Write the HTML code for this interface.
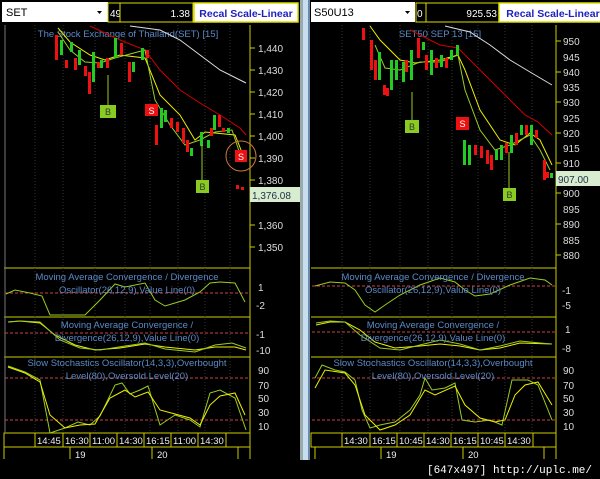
<!DOCTYPE html>
<html><head><meta charset="utf-8"><style>
html,body{margin:0;padding:0;background:#000;width:600px;height:479px;overflow:hidden;font-family:"Liberation Sans",sans-serif}
svg{display:block}
</style></head><body>
<svg width="600" height="479" viewBox="0 0 600 479" xmlns="http://www.w3.org/2000/svg" font-family="Liberation Sans, sans-serif">
<rect width="600" height="479" fill="#000"/>
<!-- divider -->
<rect x="300" y="0" width="3" height="460" fill="#9aa"/>
<rect x="303" y="0" width="5" height="460" fill="#c9ddf0"/>
<rect x="308" y="0" width="2" height="460" fill="#6a8aa8"/>

<!-- LEFT HEADER -->
<rect x="2" y="2" width="106" height="20" fill="#fff"/>
<text x="6" y="16" font-size="11" fill="#000">SET</text>
<path d="M97 11h5l-2.5 3z" fill="#000"/>
<rect x="108" y="3" width="12" height="19" fill="#000" stroke="#dd0" stroke-width="1"/>
<text x="110" y="17" font-size="10" fill="#fff">49</text>
<rect x="120" y="3" width="73" height="19" fill="#000" stroke="#dd0" stroke-width="1"/>
<text x="190" y="17" font-size="10" fill="#fff" text-anchor="end">1.38</text>
<rect x="194" y="3" width="104" height="19" fill="#fff" stroke="#dd0" stroke-width="1.5"/>
<text x="246" y="17" font-size="10.5" fill="#2020c0" font-weight="bold" text-anchor="middle">Recal Scale-Linear</text>

<!-- RIGHT HEADER -->
<rect x="311" y="2" width="104" height="20" fill="#fff"/>
<text x="314" y="16" font-size="11" fill="#000">S50U13</text>
<path d="M405 11h5l-2.5 3z" fill="#000"/>
<rect x="416" y="3" width="10" height="19" fill="#000" stroke="#dd0"/>
<text x="417" y="17" font-size="10" fill="#fff">0</text>
<rect x="426" y="3" width="73" height="19" fill="#000" stroke="#dd0"/>
<text x="497" y="17" font-size="10" fill="#fff" text-anchor="end">925.53</text>
<rect x="499" y="3" width="104" height="19" fill="#fff" stroke="#dd0" stroke-width="1.5"/>
<text x="553" y="17" font-size="10.5" fill="#2020c0" font-weight="bold" text-anchor="middle">Recal Scale-Linear</text>

<!-- LEFT PANEL FRAME -->
<g stroke="#cc0" fill="none" stroke-width="1">
<line x1="250" y1="25" x2="250" y2="459"/>
<line x1="4" y1="268" x2="250" y2="268"/>
<line x1="4" y1="317" x2="250" y2="317"/>
<line x1="4" y1="357" x2="250" y2="357"/>
<rect x="4" y="433" width="246" height="14"/>
<line x1="4" y1="447" x2="4" y2="459"/>
<line x1="70" y1="447" x2="70" y2="459"/>
<line x1="152" y1="447" x2="152" y2="459"/>
<line x1="238" y1="447" x2="238" y2="459"/>
</g>
<line x1="5" y1="25" x2="5" y2="433" stroke="#777" stroke-width="1"/>
<!-- grid dotted verticals left -->
<g stroke="#333" stroke-dasharray="1,2">
<line x1="35" y1="25" x2="35" y2="433"/><line x1="63" y1="25" x2="63" y2="433"/><line x1="95" y1="25" x2="95" y2="433"/><line x1="125" y1="25" x2="125" y2="433"/><line x1="150" y1="25" x2="150" y2="433"/><line x1="178" y1="25" x2="178" y2="433"/><line x1="205" y1="25" x2="205" y2="433"/><line x1="230" y1="25" x2="230" y2="433"/>
</g>
<!-- left axis labels -->
<g font-size="10" fill="#ddd">
<text x="258" y="52">1,440</text><text x="258" y="74">1,430</text><text x="258" y="96">1,420</text><text x="258" y="118">1,410</text><text x="258" y="140">1,400</text><text x="258" y="162">1,390</text><text x="258" y="184">1,380</text><text x="258" y="229">1,360</text><text x="258" y="251">1,350</text>
</g>
<g stroke="#cc0"><line x1="250" y1="48" x2="255" y2="48"/><line x1="250" y1="70" x2="255" y2="70"/><line x1="250" y1="92" x2="255" y2="92"/><line x1="250" y1="114" x2="255" y2="114"/><line x1="250" y1="136" x2="255" y2="136"/><line x1="250" y1="158" x2="255" y2="158"/><line x1="250" y1="180" x2="255" y2="180"/><line x1="250" y1="225" x2="255" y2="225"/><line x1="250" y1="247" x2="255" y2="247"/></g>
<rect x="250" y="187" width="50" height="15" fill="#d8ecd0"/>
<text x="252" y="199" font-size="10" fill="#234">1,376.08</text>
<text x="128" y="37" font-size="9.5" fill="#5a8ac8" text-anchor="middle">The Stock Exchange of Thailand(SET) [15]</text>

<!-- left MAs -->
<polyline fill="none" stroke="#ddd" stroke-width="1" points="130,26 160,30 180,40 200,55 220,70 240,80 246,83"/>
<polyline fill="none" stroke="#c00" stroke-width="1" points="90,26 120,40 145,50 160,70 180,90 200,103 220,115 240,128 246,135"/>
<polyline fill="none" stroke="#ee0" stroke-width="1" points="58,28 70,42 90,55 105,60 120,55 145,58 160,95 180,115 195,140 205,132 235,135 245,160"/>
<polyline fill="none" stroke="#9c2" stroke-width="1" points="58,32 70,50 85,62 100,63 115,58 145,50 155,100 170,125 185,145 200,140 215,132 232,130 242,160"/>
<!-- left candles -->
<g fill="#2c2">
<rect x="60" y="40" width="3" height="15"/><rect x="70" y="42" width="3" height="10"/><rect x="78" y="50" width="3" height="15"/><rect x="92" y="52" width="3" height="30"/><rect x="100" y="60" width="3" height="8"/><rect x="114" y="38" width="3" height="20"/><rect x="132" y="62" width="3" height="10"/><rect x="141" y="48" width="3" height="12"/><rect x="160" y="108" width="3" height="20"/><rect x="164" y="110" width="3" height="12"/><rect x="190" y="148" width="3" height="8"/><rect x="200" y="132" width="3" height="14"/><rect x="213" y="115" width="3" height="15"/><rect x="227" y="128" width="3" height="5"/><rect x="207" y="140" width="3" height="8"/>
</g>
<g fill="#e11">
<rect x="55" y="35" width="3" height="25"/><rect x="65" y="60" width="3" height="8"/><rect x="74" y="58" width="3" height="12"/><rect x="84" y="66" width="3" height="10"/><rect x="88" y="72" width="3" height="22"/><rect x="97" y="62" width="3" height="6"/><rect x="106" y="58" width="3" height="10"/><rect x="120" y="43" width="3" height="12"/><rect x="128" y="62" width="3" height="20"/><rect x="146" y="50" width="3" height="8"/><rect x="155" y="125" width="3" height="20"/><rect x="170" y="118" width="3" height="10"/><rect x="176" y="122" width="3" height="10"/><rect x="182" y="128" width="3" height="15"/><rect x="186" y="140" width="3" height="12"/><rect x="210" y="128" width="3" height="8"/><rect x="218" y="115" width="3" height="12"/><rect x="222" y="128" width="3" height="4"/><rect x="236" y="185" width="3" height="4"/><rect x="241" y="187" width="3" height="3"/>
</g>
<line x1="108" y1="75" x2="108" y2="105" stroke="#9c2"/>
<rect x="100" y="105" width="16" height="13" fill="#8c2"/><text x="108" y="115" font-size="9" fill="#333" text-anchor="middle">B</text>
<rect x="145" y="104" width="13" height="12" fill="#e11"/><text x="151.5" y="114" font-size="9" fill="#fff" text-anchor="middle">S</text>
<line x1="202" y1="145" x2="202" y2="180" stroke="#9c2"/>
<rect x="196" y="180" width="13" height="13" fill="#8c2"/><text x="202.5" y="190" font-size="9" fill="#333" text-anchor="middle">B</text>
<circle cx="241" cy="156" r="15" fill="none" stroke="#c74" stroke-width="1"/>
<rect x="235" y="150" width="12" height="12" fill="#e11"/><text x="241" y="160" font-size="9" fill="#fff" text-anchor="middle">S</text>

<!-- left MACD1 -->
<line x1="5" y1="293" x2="250" y2="293" stroke="#c44" stroke-dasharray="3,2"/>
<polyline fill="none" stroke="#9c2" points="6,294 15,290 30,293 42,296 50,315 85,315 100,300 115,284 125,287 145,283 155,300 165,306 185,300 200,292 210,283 220,282 235,283 245,302"/>
<text x="127" y="280" font-size="9.5" fill="#5a8ac8" text-anchor="middle">Moving Average Convergence / Divergence</text>
<text x="127" y="293" font-size="9.5" fill="#5a8ac8" text-anchor="middle">Oscillator(26,12,9),Value Line(0)</text>
<text x="258" y="291" font-size="10" fill="#ddd">1</text><text x="256" y="309" font-size="10" fill="#ddd">-2</text>
<!-- MACD2 -->
<line x1="5" y1="333" x2="250" y2="333" stroke="#c44" stroke-dasharray="3,2"/>
<polyline fill="none" stroke="#ee0" points="8,322 20,321 40,323 55,335 75,345 95,350 120,348 145,344 165,347 195,350 215,347 235,347 246,350"/>
<polyline fill="none" stroke="#9c2" points="8,322 20,321 40,322 60,340 80,348 100,350 125,346 145,343 165,349 195,352 215,345 232,343 246,348"/>
<text x="127" y="328" font-size="9.5" fill="#5a8ac8" text-anchor="middle">Moving Average Convergence /</text>
<text x="127" y="341" font-size="9.5" fill="#5a8ac8" text-anchor="middle">Divergence(26,12,9),Value Line(0)</text>
<text x="256" y="338" font-size="10" fill="#ddd">-1</text><text x="256" y="354" font-size="10" fill="#ddd">-10</text>
<!-- Stoch -->
<line x1="5" y1="378" x2="250" y2="378" stroke="#c44" stroke-dasharray="3,2"/>
<line x1="5" y1="420" x2="250" y2="420" stroke="#c44" stroke-dasharray="3,2"/>
<polyline fill="none" stroke="#9c2" points="8,366 25,372 40,380 50,433 65,428 78,422 90,425 100,416 115,385 122,383 130,394 140,390 148,386 160,425 175,415 190,420 200,427 210,393 220,390 235,398 246,430"/>
<polyline fill="none" stroke="#ee0" points="8,367 25,373 40,382 50,415 65,428 80,425 95,424 110,398 125,390 135,397 148,392 160,410 175,414 190,418 200,425 210,405 220,396 235,393 245,415"/>
<text x="127" y="366" font-size="9.5" fill="#5a8ac8" text-anchor="middle">Slow Stochastics Oscillator(14,3,3),Overbought</text>
<text x="127" y="379" font-size="9.5" fill="#5a8ac8" text-anchor="middle">Level(80),Oversold Level(20)</text>
<g font-size="10" fill="#ddd"><text x="258" y="374">90</text><text x="258" y="389">70</text><text x="258" y="402">50</text><text x="258" y="416">30</text><text x="258" y="430">10</text></g>
<!-- time bar left -->
<g stroke="#cc0"><line x1="35" y1="433" x2="35" y2="447"/><line x1="63" y1="433" x2="63" y2="447"/><line x1="90" y1="433" x2="90" y2="447"/><line x1="117" y1="433" x2="117" y2="447"/><line x1="144" y1="433" x2="144" y2="447"/><line x1="171" y1="433" x2="171" y2="447"/><line x1="198" y1="433" x2="198" y2="447"/><line x1="226" y1="433" x2="226" y2="447"/></g>
<g font-size="9.5" fill="#eee"><text x="37" y="444">14:45</text><text x="65" y="444">16:30</text><text x="92" y="444">11:00</text><text x="119" y="444">14:30</text><text x="146" y="444">16:15</text><text x="173" y="444">11:00</text><text x="200" y="444">14:30</text>
<text x="75" y="458">19</text><text x="157" y="458">20</text></g>

<!-- RIGHT PANEL FRAME -->
<g stroke="#cc0" fill="none">
<line x1="556" y1="25" x2="556" y2="459"/>
<line x1="311" y1="268" x2="556" y2="268"/>
<line x1="311" y1="317" x2="556" y2="317"/>
<line x1="311" y1="357" x2="556" y2="357"/>
<rect x="311" y="433" width="245" height="14"/>
<line x1="315" y1="447" x2="315" y2="459"/><line x1="381" y1="447" x2="381" y2="459"/><line x1="463" y1="447" x2="463" y2="459"/><line x1="544" y1="447" x2="544" y2="459"/>
</g>
<g stroke="#333" stroke-dasharray="1,2">
<line x1="342" y1="25" x2="342" y2="433"/><line x1="370" y1="25" x2="370" y2="433"/><line x1="400" y1="25" x2="400" y2="433"/><line x1="428" y1="25" x2="428" y2="433"/><line x1="452" y1="25" x2="452" y2="433"/><line x1="478" y1="25" x2="478" y2="433"/><line x1="505" y1="25" x2="505" y2="433"/><line x1="532" y1="25" x2="532" y2="433"/>
</g>
<g font-size="10" fill="#ddd">
<text x="563" y="45">950</text><text x="563" y="61">945</text><text x="563" y="76">940</text><text x="563" y="91">935</text><text x="563" y="106">930</text><text x="563" y="122">925</text><text x="563" y="137">920</text><text x="563" y="152">915</text><text x="563" y="167">910</text><text x="563" y="197">900</text><text x="563" y="213">895</text><text x="563" y="228">890</text><text x="563" y="244">885</text><text x="563" y="259">880</text>
</g>
<g stroke="#cc0"><line x1="556" y1="41" x2="561" y2="41"/><line x1="556" y1="72" x2="561" y2="72"/><line x1="556" y1="102" x2="561" y2="102"/><line x1="556" y1="133" x2="561" y2="133"/><line x1="556" y1="163" x2="561" y2="163"/><line x1="556" y1="193" x2="561" y2="193"/><line x1="556" y1="224" x2="561" y2="224"/><line x1="556" y1="255" x2="561" y2="255"/></g>
<rect x="556" y="171" width="44" height="15" fill="#d8ecd0"/>
<text x="558" y="183" font-size="10" fill="#234">907.00</text>
<text x="440" y="37" font-size="9.5" fill="#5a8ac8" text-anchor="middle">SET50 SEP 13  [15]</text>

<polyline fill="none" stroke="#ddd" points="445,26 470,32 490,45 510,60 530,72 552,85"/>
<polyline fill="none" stroke="#c00" points="410,30 440,45 458,48 470,60 490,80 510,100 525,115 538,122 552,135"/>
<polyline fill="none" stroke="#ee0" points="370,26 380,40 400,60 415,63 440,60 458,55 465,70 480,110 500,140 515,145 530,133 540,140 552,165"/>
<polyline fill="none" stroke="#9c2" points="375,45 385,68 400,70 420,62 440,62 458,55 465,90 480,130 495,150 510,145 530,135 540,150 550,170"/>
<g fill="#2c2">
<rect x="378" y="52" width="3" height="28"/><rect x="390" y="60" width="3" height="30"/><rect x="395" y="60" width="3" height="20"/><rect x="402" y="62" width="3" height="20"/><rect x="410" y="50" width="3" height="30"/><rect x="422" y="42" width="3" height="8"/><rect x="430" y="50" width="3" height="25"/><rect x="440" y="55" width="3" height="12"/><rect x="450" y="50" width="3" height="10"/><rect x="456" y="45" width="3" height="10"/><rect x="463" y="140" width="3" height="25"/><rect x="468" y="145" width="3" height="20"/><rect x="495" y="150" width="3" height="10"/><rect x="500" y="145" width="3" height="15"/><rect x="510" y="135" width="3" height="18"/><rect x="520" y="125" width="3" height="10"/><rect x="530" y="125" width="3" height="20"/><rect x="550" y="173" width="3" height="5"/>
</g>
<g fill="#e11">
<rect x="362" y="28" width="3" height="12"/><rect x="370" y="40" width="3" height="30"/><rect x="374" y="60" width="3" height="20"/><rect x="383" y="85" width="3" height="10"/><rect x="386" y="88" width="3" height="8"/><rect x="405" y="60" width="3" height="12"/><rect x="417" y="38" width="3" height="20"/><rect x="425" y="55" width="3" height="15"/><rect x="435" y="58" width="3" height="10"/><rect x="445" y="58" width="3" height="10"/><rect x="474" y="145" width="3" height="10"/><rect x="480" y="146" width="3" height="12"/><rect x="486" y="150" width="3" height="14"/><rect x="490" y="155" width="3" height="15"/><rect x="505" y="143" width="3" height="10"/><rect x="515" y="133" width="3" height="12"/><rect x="525" y="125" width="3" height="10"/><rect x="535" y="130" width="3" height="8"/><rect x="543" y="160" width="3" height="20"/><rect x="546" y="172" width="3" height="6"/>
</g>
<line x1="412" y1="92" x2="412" y2="120" stroke="#9c2"/>
<rect x="405" y="120" width="14" height="13" fill="#8c2"/><text x="412" y="130" font-size="9" fill="#333" text-anchor="middle">B</text>
<rect x="456" y="117" width="13" height="13" fill="#e11"/><text x="462.5" y="127" font-size="9" fill="#fff" text-anchor="middle">S</text>
<line x1="509" y1="152" x2="509" y2="188" stroke="#9c2"/>
<rect x="503" y="188" width="13" height="13" fill="#8c2"/><text x="509.5" y="198" font-size="9" fill="#333" text-anchor="middle">B</text>

<!-- right MACD1 -->
<line x1="312" y1="286" x2="556" y2="286" stroke="#c44" stroke-dasharray="3,2"/>
<polyline fill="none" stroke="#9c2" points="315,286 330,282 345,283 355,290 365,305 375,312 385,305 400,295 420,285 440,278 455,282 465,290 475,296 490,294 510,285 530,278 545,280 552,285"/>
<text x="433" y="280" font-size="9.5" fill="#5a8ac8" text-anchor="middle">Moving Average Convergence / Divergence</text>
<text x="433" y="293" font-size="9.5" fill="#5a8ac8" text-anchor="middle">Oscillator(26,12,9),Value Line(0)</text>
<text x="562" y="294" font-size="10" fill="#ddd">-1</text><text x="562" y="309" font-size="10" fill="#ddd">-5</text>
<!-- MACD2 -->
<line x1="312" y1="332" x2="556" y2="332" stroke="#c44" stroke-dasharray="3,2"/>
<polyline fill="none" stroke="#ee0" points="316,325 330,322 345,322 360,330 375,342 395,348 420,346 440,344 460,346 480,350 500,348 520,343 552,344"/>
<polyline fill="none" stroke="#9c2" points="316,323 330,321 345,322 360,335 380,348 400,350 420,345 440,340 460,344 480,350 500,346 520,341 540,343 552,344"/>
<text x="433" y="328" font-size="9.5" fill="#5a8ac8" text-anchor="middle">Moving Average Convergence /</text>
<text x="433" y="341" font-size="9.5" fill="#5a8ac8" text-anchor="middle">Divergence(26,12,9),Value Line(0)</text>
<text x="565" y="333" font-size="10" fill="#ddd">1</text><text x="562" y="352" font-size="10" fill="#ddd">-8</text>
<!-- Stoch -->
<line x1="312" y1="378" x2="556" y2="378" stroke="#c44" stroke-dasharray="3,2"/>
<line x1="312" y1="420" x2="556" y2="420" stroke="#c44" stroke-dasharray="3,2"/>
<polyline fill="none" stroke="#9c2" points="315,378 322,365 335,370 345,372 355,380 362,410 370,428 380,425 395,422 410,410 420,395 425,378 432,390 445,388 455,383 462,420 475,422 490,420 502,425 512,380 528,380 538,385 552,420"/>
<polyline fill="none" stroke="#ee0" points="315,388 325,370 345,373 355,385 365,415 380,430 395,425 410,415 425,390 435,395 455,386 465,405 480,418 495,422 505,420 515,395 525,385 538,382 552,405"/>
<text x="433" y="366" font-size="9.5" fill="#5a8ac8" text-anchor="middle">Slow Stochastics Oscillator(14,3,3),Overbought</text>
<text x="433" y="379" font-size="9.5" fill="#5a8ac8" text-anchor="middle">Level(80),Oversold Level(20)</text>
<g font-size="10" fill="#ddd"><text x="563" y="374">90</text><text x="563" y="389">70</text><text x="563" y="402">50</text><text x="563" y="416">30</text><text x="563" y="430">10</text></g>
<g stroke="#cc0"><line x1="342" y1="433" x2="342" y2="447"/><line x1="370" y1="433" x2="370" y2="447"/><line x1="397" y1="433" x2="397" y2="447"/><line x1="424" y1="433" x2="424" y2="447"/><line x1="451" y1="433" x2="451" y2="447"/><line x1="478" y1="433" x2="478" y2="447"/><line x1="505" y1="433" x2="505" y2="447"/><line x1="533" y1="433" x2="533" y2="447"/></g>
<g font-size="9.5" fill="#eee"><text x="344" y="444">14:30</text><text x="372" y="444">16:15</text><text x="399" y="444">10:45</text><text x="426" y="444">14:30</text><text x="453" y="444">16:15</text><text x="480" y="444">10:45</text><text x="507" y="444">14:30</text>
<text x="386" y="458">19</text><text x="468" y="458">20</text></g>

<text x="592" y="473" font-size="11" fill="#fff" font-family="Liberation Mono, monospace" text-anchor="end">[647x497] http://uplc.me/</text>
</svg>
</body></html>
